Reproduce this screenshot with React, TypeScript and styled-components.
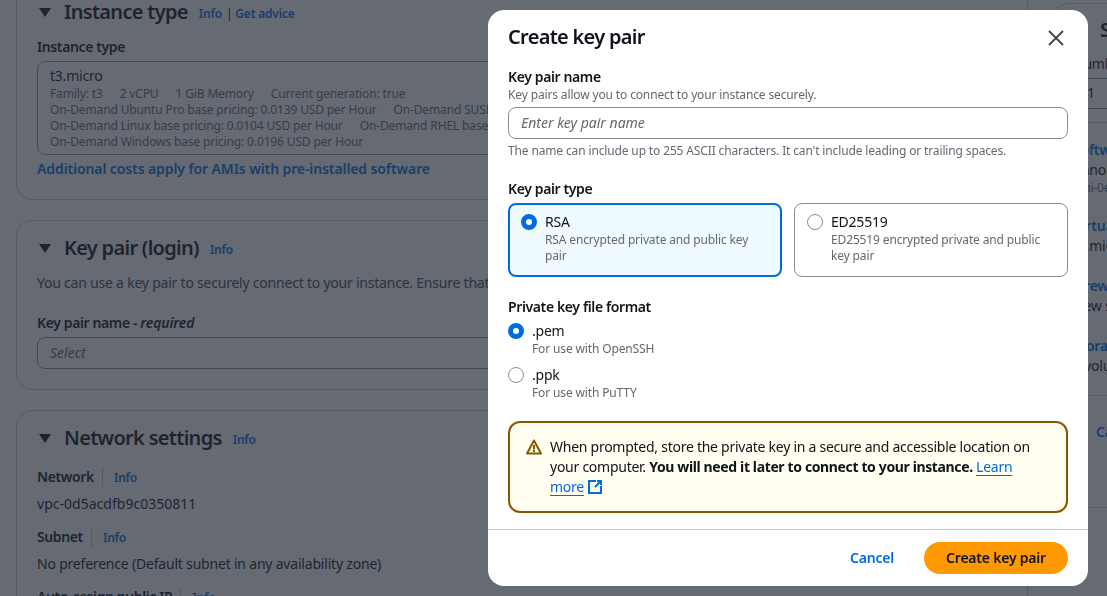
import React from 'react';
import styled, { createGlobalStyle } from 'styled-components';

const GlobalStyle = createGlobalStyle`
  html, body {
    margin: 0;
    padding: 0;
    background: #ffffff;
    font-family: "Noto Sans", "Liberation Sans", sans-serif;
    color: #0f141a;
  }
`;

const Page = styled.div`
  display: flex;
  width: 1107px;
  height: 596px;
  overflow: hidden;
  font-size: 14px;
  line-height: 20px;
  letter-spacing: -0.22px;
`;

const MainColumn = styled.main`
  flex: 0 0 1044px;
  display: flex;
  flex-direction: column;
  gap: 20px;
  box-sizing: border-box;
  margin-top: -16px;
  padding: 0 16px;
`;

const Card = styled.section<{ $h: number }>`
  box-sizing: border-box;
  border: 1px solid #c6c6cd;
  border-radius: 16px;
  padding: 13px 20px 0;
  height: ${({ $h }) => $h}px;
  flex: none;
`;

const CardHeader = styled.div`
  display: flex;
  align-items: center;
  height: 28px;
`;

const Caret = styled.span`
  width: 0;
  height: 0;
  flex: none;
  border-left: 6px solid transparent;
  border-right: 6px solid transparent;
  border-top: 9px solid #0f141a;
  margin: 0 13px 0 2px;
`;

const CardTitle = styled.h2`
  margin: 0 11px 0 0;
  font-size: 20px;
  line-height: 28px;
  font-weight: 600;
  letter-spacing: -0.7px;
`;

const InfoLink = styled.a`
  color: #006ce0;
  font-size: 12px;
  line-height: 16px;
  font-weight: 600;
  letter-spacing: -0.2px;
  padding-top: 3px;
`;

const FieldInfo = styled(InfoLink)`
  padding-top: 1px;
`;

const Pipe = styled.span`
  margin: 3px 3px 0 4px;
  font-size: 12px;
`;

const Label = styled.div<{ $top?: number }>`
  font-weight: 600;
  letter-spacing: -0.38px;
  margin-top: ${({ $top }) => $top ?? 0}px;

  em {
    letter-spacing: -0.1px;
  }
`;

const InstanceBox = styled.div`
  box-sizing: border-box;
  height: 94px;
  margin-top: 4px;
  padding: 4px 12px;
  border: 1px solid #8c8c94;
  border-radius: 8px;
  white-space: nowrap;
  overflow: hidden;
`;

const BoxRow = styled.div`
  display: flex;
  gap: 17px;
  color: #656871;
  font-size: 12px;
  line-height: 16px;
  letter-spacing: -0.14px;
`;

const BlueLink = styled.a`
  display: block;
  margin-top: 4px;
  color: #006ce0;
  font-weight: 600;
  letter-spacing: -0.1px;
`;

const Paragraph = styled.p`
  margin: 11px 0 0;
  white-space: nowrap;
  color: #424650;
`;

const SelectBox = styled.div`
  box-sizing: border-box;
  height: 32px;
  margin-top: 4px;
  padding: 5px 12px;
  border: 1px solid #8c8c94;
  border-radius: 8px;
  color: #656871;
  font-style: italic;
  letter-spacing: 0;
`;

const FieldHead = styled.div<{ $top: number }>`
  display: flex;
  align-items: center;
  margin-top: ${({ $top }) => $top}px;
  height: 20px;
`;

const FieldName = styled.span`
  font-weight: 600;
  letter-spacing: -0.38px;
  padding-right: 8px;
  margin-right: 11px;
  border-right: 1px solid #c6c6cd;
`;

const FieldValue = styled.div<{ $wide?: boolean }>`
  margin-top: 7px;
  letter-spacing: ${({ $wide }) => ($wide ? '0.02px' : '-0.2px')};
`;

const SideColumn = styled.aside`
  flex: 1;
  min-width: 0;
  padding: 3px 0 0 8px;
`;

const SummaryCard = styled.section`
  box-sizing: border-box;
  width: 400px;
  height: 505px;
  padding: 12px 20px;
  border: 1px solid #c6c6cd;
  border-radius: 16px;
`;

const SummaryHead = styled.div`
  display: flex;
  align-items: center;
  height: 28px;
`;

const SummaryLabel = styled.div`
  margin-top: 10px;
  white-space: nowrap;
`;

const SummaryInput = styled.div`
  box-sizing: border-box;
  height: 31px;
  margin-top: 4px;
  padding: 4px 14px;
  border-top: 1px solid #8c8c94;
  border-bottom: 1px solid #8c8c94;
`;

const SummaryDivider = styled.div<{ $y: string }>`
  height: 1px;
  background: #c6c6cd;
  margin: ${({ $y }) => $y};
`;

const SummaryItem = styled.div`
  margin-bottom: 20px;
  white-space: nowrap;
`;

const SummaryLink = styled.a`
  display: block;
  color: #006ce0;
  font-weight: 600;
`;

const Muted = styled.div`
  color: #656871;
  font-size: 12px;
  line-height: 16px;
`;

const SummaryCancel = styled.a`
  display: block;
  margin-left: 23px;
  color: #006ce0;
  font-weight: 600;
`;

const Overlay = styled.div`
  position: fixed;
  inset: 0;
  background: rgba(35, 43, 55, 0.7);
`;

const Modal = styled.div`
  position: fixed;
  left: 488px;
  top: 10px;
  width: 600px;
  height: 576px;
  display: flex;
  flex-direction: column;
  background: #ffffff;
  border-radius: 16px;
  overflow: hidden;
`;

const ModalHeader = styled.header`
  display: flex;
  align-items: center;
  justify-content: space-between;
  height: 28px;
  padding: 13px 24px 0 20px;
`;

const ModalTitle = styled.h1`
  margin: 0;
  font-size: 20px;
  line-height: 28px;
  font-weight: 600;
  letter-spacing: -0.7px;
`;

const CloseIcon = styled.svg`
  width: 16px;
  height: 16px;
  margin-top: 1px;
`;

const ModalBody = styled.div`
  flex: 1;
  padding: 16px 20px 0;
`;

const Constraint = styled.div`
  font-size: 12px;
  line-height: 16px;
  letter-spacing: -0.14px;
  color: #656871;
`;

const ModalField = styled.div<{ $gap: number }>`
  margin-bottom: ${({ $gap }) => $gap}px;
`;

const KeyInput = styled.div`
  box-sizing: border-box;
  height: 32px;
  margin: 4px 0;
  padding: 5px 12px;
  border: 1px solid #8c8c94;
  border-radius: 8px;
  color: #656871;
  font-style: italic;
  letter-spacing: 0;
`;

const TileGrid = styled.div`
  display: grid;
  grid-template-columns: 274px 274px;
  gap: 12px;
  margin-top: 4px;
`;

const Tile = styled.div<{ $active?: boolean }>`
  box-sizing: border-box;
  height: 74px;
  display: flex;
  gap: 8px;
  padding: ${({ $active }) => ($active ? '7px 11px' : '8px 12px')};
  border: ${({ $active }) => ($active ? '2px solid #006ce0' : '1px solid #8c8c94')};
  border-radius: 8px;
  background: ${({ $active }) => ($active ? '#f0fbff' : '#ffffff')};
`;

const Radio = styled.span<{ $on?: boolean }>`
  box-sizing: border-box;
  flex: none;
  width: 16px;
  height: 16px;
  margin-top: 2px;
  border-radius: 50%;
  border: ${({ $on }) => ($on ? '5px solid #006ce0' : '1px solid #8c8c94')};
  background: #ffffff;
`;

const OptionText = styled.div`
  min-width: 0;
`;

const RadioRow = styled.div<{ $top: number }>`
  display: flex;
  gap: 8px;
  margin-top: ${({ $top }) => $top}px;
`;

const Alert = styled.div`
  box-sizing: border-box;
  height: 92px;
  display: flex;
  gap: 8px;
  margin-top: 20px;
  padding: 14px 16px;
  border: 2px solid #855900;
  border-radius: 12px;
  background: #fffef0;
  letter-spacing: -0.26px;

  b {
    letter-spacing: -0.37px;
  }
`;

const AlertIcon = styled.svg`
  flex: none;
  width: 16px;
  height: 16px;
  margin-top: 2px;
`;

const LearnLink = styled.a`
  color: #006ce0;
  text-decoration: underline;
  text-underline-offset: 3px;
`;

const NoWrap = styled.span`
  white-space: nowrap;
`;

const ExternalIcon = styled.svg`
  width: 16px;
  height: 16px;
  margin-left: 3px;
  vertical-align: -3px;
`;

const ModalFooter = styled.footer`
  box-sizing: border-box;
  display: flex;
  align-items: center;
  justify-content: flex-end;
  gap: 30px;
  height: 57px;
  padding: 0 20px;
  border-top: 1px solid #c6c6cd;
`;

const CancelLink = styled.a`
  color: #006ce0;
  font-weight: 600;
`;

const PrimaryButton = styled.button`
  width: 144px;
  height: 32px;
  border: none;
  border-radius: 16px;
  background: #ff9900;
  color: #0f141a;
  font: 600 14px/20px "Noto Sans", "Liberation Sans", sans-serif;
  letter-spacing: -0.22px;
`;

const App = () => (
  <>
    <GlobalStyle />
    <Page>
      <MainColumn>
        <Card $h={216}>
          <CardHeader>
            <Caret />
            <CardTitle>Instance type</CardTitle>
            <InfoLink>Info</InfoLink>
            <Pipe>|</Pipe>
            <InfoLink>Get advice</InfoLink>
          </CardHeader>
          <Label $top={11}>Instance type</Label>
          <InstanceBox>
            <div>t3.micro</div>
            <BoxRow>
              <span>Family: t3</span>
              <span>2 vCPU</span>
              <span>1 GiB Memory</span>
              <span>Current generation: true</span>
            </BoxRow>
            <BoxRow>
              <span>On-Demand Ubuntu Pro base pricing: 0.0139 USD per Hour</span>
              <span>On-Demand SUSE base pricing: 0.0104 USD per Hour</span>
            </BoxRow>
            <BoxRow>
              <span>On-Demand Linux base pricing: 0.0104 USD per Hour</span>
              <span>On-Demand RHEL base pricing: 0.0248 USD per Hour</span>
            </BoxRow>
            <BoxRow>
              <span>On-Demand Windows base pricing: 0.0196 USD per Hour</span>
            </BoxRow>
          </InstanceBox>
          <BlueLink>Additional costs apply for AMIs with pre-installed software</BlueLink>
        </Card>
        <Card $h={170}>
          <CardHeader>
            <Caret />
            <CardTitle>Key pair (login)</CardTitle>
            <InfoLink>Info</InfoLink>
          </CardHeader>
          <Paragraph>
            You can use a key pair to securely connect to your instance. Ensure that you have access to the selected key pair before you launch the instance.
          </Paragraph>
          <Label $top={20}>
            Key pair name - <em>required</em>
          </Label>
          <SelectBox>Select</SelectBox>
        </Card>
        <Card $h={240}>
          <CardHeader>
            <Caret />
            <CardTitle>Network settings</CardTitle>
            <InfoLink>Info</InfoLink>
          </CardHeader>
          <FieldHead $top={15}>
            <FieldName>Network</FieldName>
            <FieldInfo>Info</FieldInfo>
          </FieldHead>
          <FieldValue $wide>vpc-0d5acdfb9c0350811</FieldValue>
          <FieldHead $top={13}>
            <FieldName>Subnet</FieldName>
            <FieldInfo>Info</FieldInfo>
          </FieldHead>
          <FieldValue>No preference (Default subnet in any availability zone)</FieldValue>
          <FieldHead $top={13}>
            <FieldName>Auto-assign public IP</FieldName>
            <FieldInfo>Info</FieldInfo>
          </FieldHead>
        </Card>
      </MainColumn>
      <SideColumn>
        <SummaryCard>
          <SummaryHead>
            <Caret />
            <CardTitle>Summary</CardTitle>
          </SummaryHead>
          <SummaryLabel>Number of instances</SummaryLabel>
          <SummaryInput>1</SummaryInput>
          <SummaryDivider $y="13px -20px 17px" />
          <SummaryItem>
            <SummaryLink>Software Image (AMI)</SummaryLink>
            <div>Canonical, Ubuntu, 24.04</div>
            <Muted>ami-0ecb62995f68bb549</Muted>
          </SummaryItem>
          <SummaryItem>
            <SummaryLink>Virtual server type (instance type)</SummaryLink>
            <div>t3.micro</div>
          </SummaryItem>
          <SummaryItem>
            <SummaryLink>Firewall (security group)</SummaryLink>
            <div>New security group</div>
          </SummaryItem>
          <SummaryItem>
            <SummaryLink>Storage (volumes)</SummaryLink>
            <div>1 volume(s) - 8 GiB</div>
          </SummaryItem>
          <SummaryDivider $y="-1px -20px 26px" />
          <SummaryCancel>Cancel</SummaryCancel>
        </SummaryCard>
      </SideColumn>
      <Overlay />
      <Modal>
        <ModalHeader>
          <ModalTitle>Create key pair</ModalTitle>
          <CloseIcon viewBox="0 0 16 16" fill="none" stroke="#424650" strokeWidth="1.8">
            <path d="M1 1l14 14M15 1 1 15" />
          </CloseIcon>
        </ModalHeader>
        <ModalBody>
          <ModalField $gap={20}>
            <Label>Key pair name</Label>
            <Constraint>Key pairs allow you to connect to your instance securely.</Constraint>
            <KeyInput>Enter key pair name</KeyInput>
            <Constraint>The name can include up to 255 ASCII characters. It can't include leading or trailing spaces.</Constraint>
          </ModalField>
          <ModalField $gap={20}>
            <Label>Key pair type</Label>
            <TileGrid>
              <Tile $active>
                <Radio $on />
                <OptionText>
                  <div>RSA</div>
                  <Constraint>RSA encrypted private and public key pair</Constraint>
                </OptionText>
              </Tile>
              <Tile>
                <Radio />
                <OptionText>
                  <div>ED25519</div>
                  <Constraint>ED25519 encrypted private and public key pair</Constraint>
                </OptionText>
              </Tile>
            </TileGrid>
          </ModalField>
          <Label>Private key file format</Label>
          <RadioRow $top={4}>
            <Radio $on />
            <OptionText>
              <div>.pem</div>
              <Constraint>For use with OpenSSH</Constraint>
            </OptionText>
          </RadioRow>
          <RadioRow $top={8}>
            <Radio />
            <OptionText>
              <div>.ppk</div>
              <Constraint>For use with PuTTY</Constraint>
            </OptionText>
          </RadioRow>
          <Alert>
            <AlertIcon viewBox="0 0 16 16" fill="none" stroke="#855900" strokeWidth="2">
              <path d="M8 1.5 15 14.5H1Z" strokeLinejoin="round" />
              <path d="M8 6v4.5M8 11v2" />
            </AlertIcon>
            <div>
              When prompted, store the private key in a secure and accessible location on your computer.{' '}
              <b>You will need it later to connect to your instance.</b>{' '}
              <LearnLink>Learn</LearnLink>{' '}
              <NoWrap>
                <LearnLink>more</LearnLink>
                <ExternalIcon viewBox="0 0 16 16" fill="none" stroke="#006ce0" strokeWidth="2">
                  <path d="M9 2H2v12h12V7" />
                  <path d="M14 2 8 8M10 2h4v4" />
                </ExternalIcon>
              </NoWrap>
            </div>
          </Alert>
        </ModalBody>
        <ModalFooter>
          <CancelLink>Cancel</CancelLink>
          <PrimaryButton>Create key pair</PrimaryButton>
        </ModalFooter>
      </Modal>
    </Page>
  </>
);

export default App;
